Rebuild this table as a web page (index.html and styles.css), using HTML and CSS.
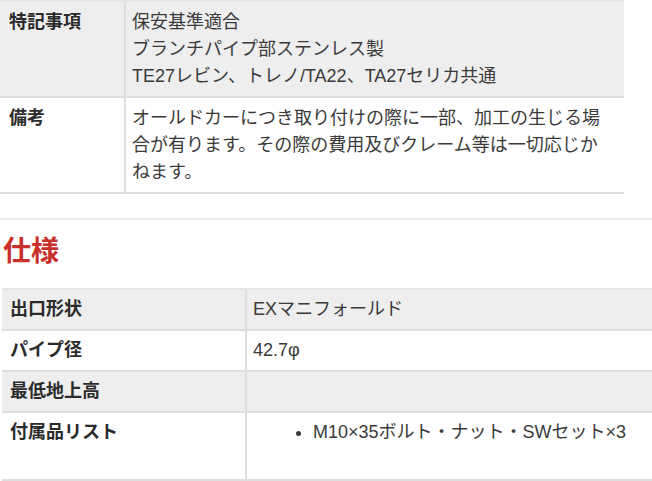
FILE: index.html
```html
<!DOCTYPE html>
<html lang="ja">
<head>
<meta charset="utf-8">
<title>仕様</title>
<link rel="stylesheet" href="styles.css">
</head>
<body>
<table class="spec spec-notes">
  <colgroup><col class="c-label"><col></colgroup>
  <tr class="odd">
    <th>特記事項</th>
    <td>保安基準適合<br>ブランチパイプ部ステンレス製<br>TE27レビン、トレノ/TA22、TA27セリカ共通</td>
  </tr>
  <tr>
    <th>備考</th>
    <td>オールドカーにつき取り付けの際に一部、加工の生じる場合が有ります。その際の費用及びクレーム等は一切応じかねます。</td>
  </tr>
</table>
<hr class="divider">
<h2 class="section-title">仕様</h2>
<table class="spec spec-main">
  <colgroup><col class="c-label"><col></colgroup>
  <tr class="odd">
    <th>出口形状</th>
    <td>EXマニフォールド</td>
  </tr>
  <tr>
    <th>パイプ径</th>
    <td>42.7φ</td>
  </tr>
  <tr class="odd">
    <th>最低地上高</th>
    <td></td>
  </tr>
  <tr>
    <th>付属品リスト</th>
    <td><ul class="parts"><li>M10×35ボルト・ナット・SWセット×3</li></ul></td>
  </tr>
</table>
</body>
</html>
```
FILE: styles.css
```css
html, body {
  margin: 0;
  padding: 0;
  background: #ffffff;
}
body {
  font-family: "Liberation Sans", "Noto Sans CJK JP", sans-serif;
  font-size: 18px;
  line-height: 27px;
  color: #333333;
}
.spec {
  border-collapse: separate;
  border-spacing: 0;
  table-layout: fixed;
  border-top: 2px solid #e4e4e4;
}
.spec th,
.spec td {
  padding: 7px 7px 6px;
  text-align: left;
  vertical-align: top;
  border-bottom: 2px solid #dedede;
}
.spec th {
  font-weight: bold;
  color: #2b2b2b;
  padding-left: 9px;
  border-right: 2px solid #dedede;
}
.spec td {
  font-weight: normal;
  color: #3a3a3a;
}
.spec tr.odd th,
.spec tr.odd td {
  background: #eeeeee;
}
.spec-notes {
  width: 624px;
  margin: 0;
}
.spec-notes .c-label {
  width: 126px;
}
.spec-notes td {
  padding-left: 6px;
  padding-right: 10px;
}
.divider {
  border: 0;
  height: 2px;
  background: #ececec;
  margin: 24px 0 0 0;
}
.section-title {
  margin: 9px 0 19px 3px;
  font-size: 28px;
  line-height: 40px;
  font-weight: bold;
  color: #c8302c;
  font-family: "Noto Sans CJK JP", sans-serif;
}
.spec-main {
  width: 650px;
  margin-left: 2px;
}
.spec-main th,
.spec-main td {
  padding-top: 6px;
  padding-bottom: 6px;
}
.spec-main .c-label {
  width: 245px;
}
.spec-main th {
  padding-left: 8px;
}
.spec-main td {
  padding-left: 6px;
}
.parts {
  margin: 0 0 27px 0;
  padding-left: 60px;
}
```
